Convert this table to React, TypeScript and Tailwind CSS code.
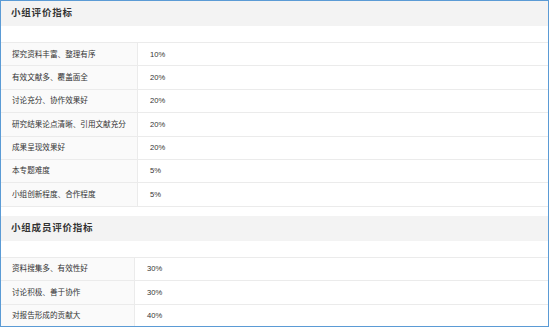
import React from 'react';

interface Item {
  label: string;
  value: string;
}

const groupItems: Item[] = [
  { label: '探究资料丰富、整理有序', value: '10%' },
  { label: '有效文献多、覆盖面全', value: '20%' },
  { label: '讨论充分、协作效果好', value: '20%' },
  { label: '研究结果论点清晰、引用文献充分', value: '20%' },
  { label: '成果呈现效果好', value: '20%' },
  { label: '本专题难度', value: '5%' },
  { label: '小组创新程度、合作程度', value: '5%' },
];

const memberItems: Item[] = [
  { label: '资料搜集多、有效性好', value: '30%' },
  { label: '讨论积极、善于协作', value: '30%' },
  { label: '对报告形成的贡献大', value: '40%' },
];

const SectionHeader: React.FC<{ title: string }> = ({ title }) => (
  <div className="h-[25px] shrink-0 bg-[#f3f3f3] flex items-center pl-[10px] text-[9.5px] font-bold tracking-[0.8px] text-[#333]">
    {title}
  </div>
);

const ScoreTable: React.FC<{ items: Item[]; labelWidth: string }> = ({ items, labelWidth }) => (
  <div className="border-t border-[#ebebeb]">
    {items.map((item) => (
      <div key={item.label} className="flex h-[23.4px] border-b border-[#ebebeb] text-[7.6px] text-[#333]">
        <div className={`${labelWidth} shrink-0 bg-[#fafafa] border-r border-[#ebebeb] flex items-center pl-[11px]`}>
          {item.label}
        </div>
        <div className="flex-1 flex items-center pl-[12px]">{item.value}</div>
      </div>
    ))}
  </div>
);

export default function App() {
  return (
    <div
      className="w-[549px] h-[327px] border border-[#5b9bd5] bg-white overflow-hidden flex flex-col"
      style={{ fontFamily: '"Liberation Sans", "Noto Sans CJK SC", sans-serif' }}
    >
      <SectionHeader title="小组评价指标" />
      <div className="h-[16px] shrink-0" />
      <ScoreTable items={groupItems} labelWidth="w-[137px]" />
      <div className="h-[9px] shrink-0" />
      <SectionHeader title="小组成员评价指标" />
      <div className="h-[16px] shrink-0" />
      <ScoreTable items={memberItems} labelWidth="w-[134px]" />
    </div>
  );
}
